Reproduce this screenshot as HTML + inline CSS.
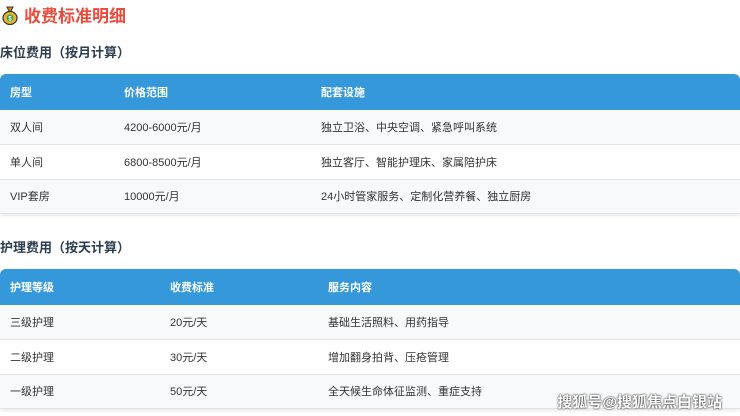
<!DOCTYPE html>
<html><head><meta charset="utf-8"><style>
*{margin:0;padding:0;box-sizing:border-box}
body{width:740px;height:416px;overflow:hidden;background:#fff;font-family:"Liberation Sans","Noto Sans CJK SC",sans-serif;color:#333;position:relative}
.t{position:absolute;left:2px;top:2px;font-size:17px;font-weight:bold;color:#e74c3c;display:flex;align-items:center}
.t .ic{width:16px;height:20px;margin-right:6px;position:relative}
.h{position:absolute;left:0;font-size:13px;font-weight:bold;color:#2c3e50}
table{position:absolute;left:0;width:740px;border-collapse:collapse;font-size:11px;border-radius:6px 6px 0 0;overflow:hidden;box-shadow:0 1px 4px rgba(0,0,0,.12)}
th{background:#3498db;color:#fff;text-align:left;font-weight:bold;height:36px;padding-left:10px;font-size:11px}
td{height:34.5px;padding-left:10px;border-bottom:1px solid #e3e3e3}
tr.a td{background:#f8f9fa}
.wm{position:absolute;right:18px;top:391px;font-size:15px;font-weight:bold;color:#fff;text-shadow:0 0 2px #333,0 0 1px #333}
</style></head><body>
<div class="t"><svg class="ic" viewBox="0 0 16 20"><path d="M5 2h6l-2 4h-2z" fill="#d4901b" stroke="#333" stroke-width="1"/><ellipse cx="8" cy="13" rx="7" ry="6.5" fill="#f0b429" stroke="#333" stroke-width="1.2"/><circle cx="8" cy="13" r="3.5" fill="#3aa655"/><text x="8" y="15.5" font-size="6" text-anchor="middle" fill="#fff" font-family="Liberation Sans">$</text></svg>收费标准明细</div>
<div class="h" style="top:42px">床位费用（按月计算）</div>
<table style="top:74px"><tr><th style="width:114px">房型</th><th style="width:197px">价格范围</th><th>配套设施</th></tr>
<tr class="a"><td>双人间</td><td>4200-6000元/月</td><td>独立卫浴、中央空调、紧急呼叫系统</td></tr>
<tr><td>单人间</td><td>6800-8500元/月</td><td>独立客厅、智能护理床、家属陪护床</td></tr>
<tr class="a"><td>VIP套房</td><td>10000元/月</td><td>24小时管家服务、定制化营养餐、独立厨房</td></tr></table>
<div class="h" style="top:237px">护理费用（按天计算）</div>
<table style="top:269px"><tr><th style="width:160px">护理等级</th><th style="width:158px">收费标准</th><th>服务内容</th></tr>
<tr class="a"><td>三级护理</td><td>20元/天</td><td>基础生活照料、用药指导</td></tr>
<tr><td>二级护理</td><td>30元/天</td><td>增加翻身拍背、压疮管理</td></tr>
<tr class="a"><td>一级护理</td><td>50元/天</td><td>全天候生命体征监测、重症支持</td></tr></table>
<div class="wm">搜狐号@搜狐焦点白银站</div>
</body></html>
